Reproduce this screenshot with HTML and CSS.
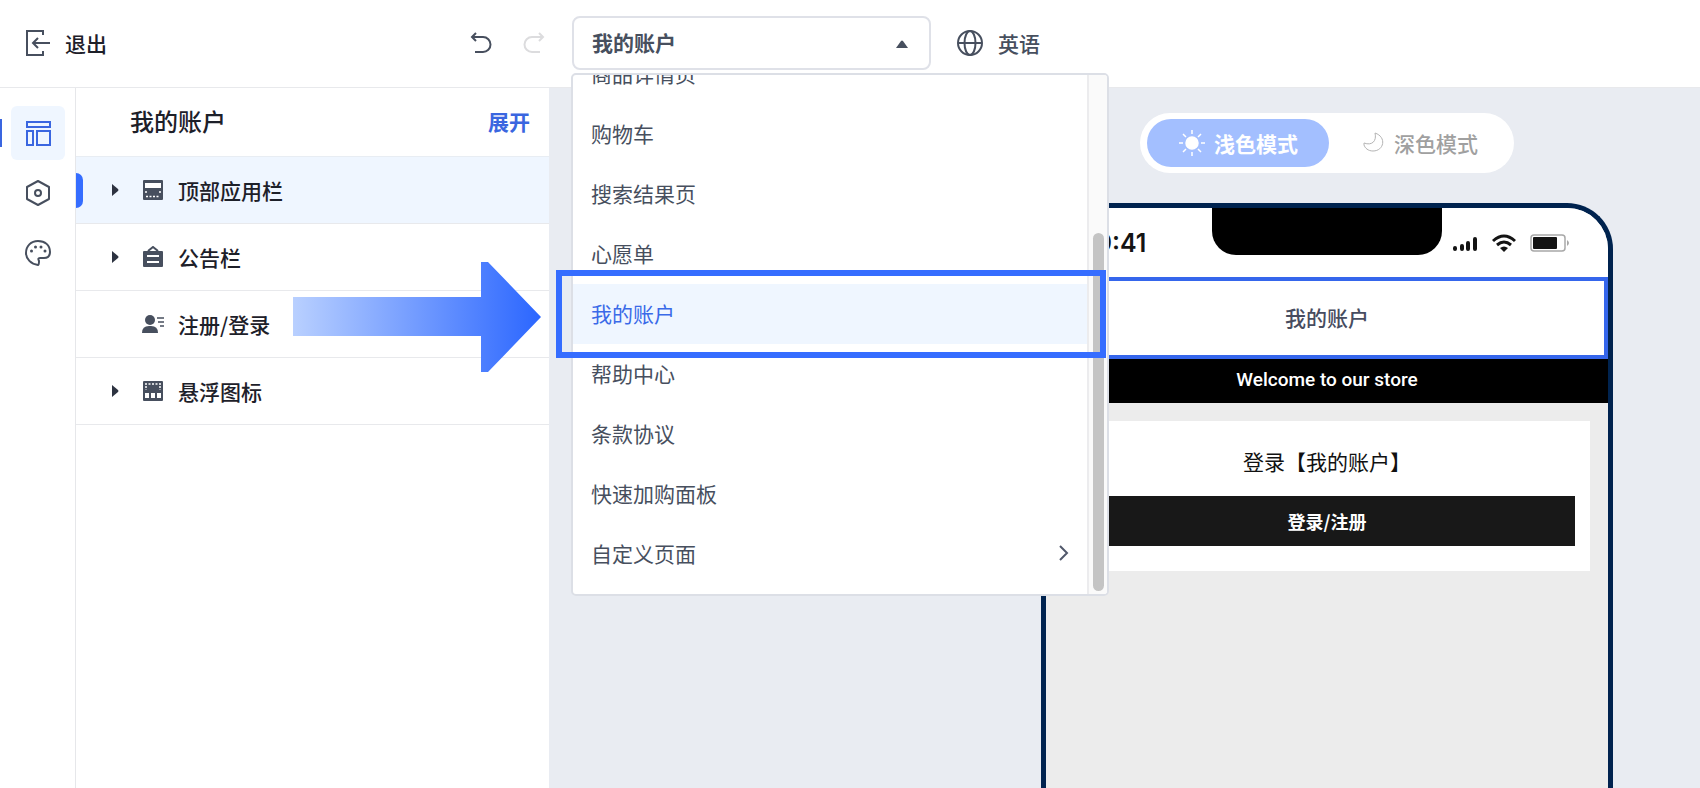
FILE: index.html
```
<!DOCTYPE html>
<html lang="zh-CN">
<head>
    <meta charset="UTF-8">
    <meta name="viewport" content="width=device-width, initial-scale=1.0">
    <title>我的账户</title>
    <link rel="stylesheet" href="styles.css">
</head>
<body>
    <header class="topbar">
        <div class="topbar-left">
            <button class="exit-btn">
                <svg width="26" height="28" viewBox="0 0 26 28" fill="none" stroke="#474f5e" stroke-width="2">
                    <path d="M18 6V2H2v24h16v-4M25 14H8M13 9l-5 5 5 5"/>
                </svg>
                退出
            </button>
            <div class="history">
                <button class="history-btn" aria-label="撤销">
                    <svg width="22" height="22" viewBox="0 0 22 22" fill="none" stroke="#474f5e" stroke-width="2">
                        <path d="M6 1L2 5l4 4M2 5h11a7.500 7.500 0 0 1 0 15H5"/>
                    </svg>
                </button>
                <button class="history-btn" aria-label="重做" disabled>
                    <svg width="22" height="22" viewBox="0 0 22 22" fill="none" stroke="#dcdcde" stroke-width="2">
                        <path d="M16 1l4 4-4 4M20 5H9a7.500 7.500 0 0 0 0 15h8"/>
                    </svg>
                </button>
            </div>
        </div>

        <div class="page-picker">
            <select class="page-select" aria-label="页面">
                <option>我的账户</option>
            </select>
            <svg class="select-caret" width="12" height="8" viewBox="0 0 12 8"><path d="M0 8L5 1q1-1 2 0l5 7z" fill="#474f5e"/></svg>

            <div class="page-menu">
                <ul class="menu-list">
                    <li><button class="menu-item">商品详情页</button></li>
                    <li><button class="menu-item">购物车</button></li>
                    <li><button class="menu-item">搜索结果页</button></li>
                    <li><button class="menu-item">心愿单</button></li>
                    <li><button class="menu-item active">我的账户</button></li>
                    <li><button class="menu-item">帮助中心</button></li>
                    <li><button class="menu-item">条款协议</button></li>
                    <li><button class="menu-item">快速加购面板</button></li>
                    <li>
                        <button class="menu-item">
                            自定义页面
                            <svg width="10" height="16" viewBox="0 0 10 16" fill="none" stroke="#51586b" stroke-width="2"><path d="M1 1l7 7-7 7"/></svg>
                        </button>
                    </li>
                </ul>
                <div class="menu-scroll"><div class="menu-thumb"></div></div>
            </div>
            <div class="highlight-frame"></div>
        </div>

        <button class="lang-btn">
            <svg width="28" height="28" viewBox="0 0 28 28" fill="none" stroke="#474f5e" stroke-width="2">
                <circle cx="14" cy="14" r="12"/>
                <ellipse cx="14" cy="14" rx="5.500" ry="12"/>
                <path d="M2 14h24"/>
            </svg>
            英语
        </button>
    </header>

    <main class="workspace">
        <nav class="rail">
            <button class="rail-btn active" aria-label="布局">
                <svg width="26" height="26" viewBox="0 0 26 26" fill="none" stroke="#3a66e0" stroke-width="2">
                    <rect x="2" y="2" width="23" height="5"/>
                    <rect x="2" y="11" width="6" height="14"/>
                    <rect x="12" y="11" width="13" height="14"/>
                </svg>
            </button>
            <button class="rail-btn" aria-label="设置">
                <svg width="26" height="28" viewBox="0 0 26 28" fill="none" stroke="#474f5e" stroke-width="2" stroke-linejoin="round">
                    <path d="M13 2l11 6v12l-11 6-11-6V8z"/>
                    <circle cx="13" cy="14" r="3"/>
                </svg>
            </button>
            <button class="rail-btn" aria-label="主题">
                <svg width="28" height="28" viewBox="0 0 28 28" fill="none" stroke="#474f5e" stroke-width="2">
                    <path d="M14 26C7 25 2 20 2 14 2 7 7 2 14 2s12 4 12 11c0 4-2 6-6 6h-4c-2 0-2 1-1 3 0 2 0 4-1 4z"/>
                    <g fill="#474f5e" stroke="none">
                        <circle cx="7.500" cy="12" r="1.500"/><circle cx="11.500" cy="8" r="1.500"/>
                        <circle cx="17" cy="8" r="1.500"/><circle cx="21" cy="12" r="1.500"/>
                    </g>
                </svg>
            </button>
        </nav>

        <section class="panel">
            <div class="panel-head">
                <h1 class="panel-title">我的账户</h1>
                <a class="panel-expand" href="#">展开</a>
            </div>
            <ul class="section-list">
                <li class="section-row active">
                    <svg class="row-caret" viewBox="0 0 7 12"><path d="M0 0l6 5q1 1 0 2l-6 5z"/></svg>
                    <svg class="row-icon" viewBox="0 0 22 22">
                        <rect x="1" y="1" width="20" height="20" rx="1" fill="#474f5e"/>
                        <rect x="3" y="4" width="16" height="5" fill="#fff"/>
                        <path d="M4 12v3M18 12v3M4 17.500h14" stroke="#fff" stroke-width="1.500" stroke-dasharray="2 1.500"/>
                    </svg>
                    顶部应用栏
                </li>
                <li class="section-row">
                    <svg class="row-caret" viewBox="0 0 7 12"><path d="M0 0l6 5q1 1 0 2l-6 5z"/></svg>
                    <svg class="row-icon" viewBox="0 0 22 22">
                        <path d="M6 5l5-4 5 4" fill="none" stroke="#474f5e" stroke-width="2"/>
                        <rect x="1" y="5" width="20" height="16" rx="1" fill="#474f5e"/>
                        <path d="M5 10h12M5 16h12" stroke="#fff" stroke-width="2"/>
                    </svg>
                    公告栏
                </li>
                <li class="section-row">
                    <span class="row-caret"></span>
                    <svg class="row-icon" viewBox="0 0 22 22">
                        <circle cx="8" cy="7" r="5" fill="#474f5e"/>
                        <path d="M0 20q0-7 7-7h2q7 0 7 7z" fill="#474f5e"/>
                        <path d="M15 5h7M16 9h6M18 13h4" stroke="#474f5e" stroke-width="1.500"/>
                    </svg>
                    注册/登录
                </li>
                <li class="section-row">
                    <svg class="row-caret" viewBox="0 0 7 12"><path d="M0 0l6 5q1 1 0 2l-6 5z"/></svg>
                    <svg class="row-icon" viewBox="0 0 22 22">
                        <rect x="1" y="1" width="20" height="20" rx="1" fill="#474f5e"/>
                        <path d="M3 4h16M4 6v4M18 6v4" stroke="#fff" stroke-width="1.500" stroke-dasharray="2 1.500"/>
                        <path d="M3 13h4v5H3zM9 13h4v5H9zM15 13h4v5h-4z" fill="#fff"/>
                    </svg>
                    悬浮图标
                </li>
            </ul>
            <svg class="guide-arrow" width="250" height="110" viewBox="0 0 250 110">
                <defs>
                    <linearGradient id="arrowFill">
                        <stop offset="0" stop-color="#b9d0ff"/>
                        <stop offset="1" stop-color="#2b66ff"/>
                    </linearGradient>
                </defs>
                <path d="M1 35h188V0h7l53 55-53 55h-7V74H1z" fill="url(#arrowFill)"/>
            </svg>
        </section>

        <section class="canvas">
            <div class="preview">
                <div class="mode-switch">
                    <button class="mode-btn active">
                        <svg width="28" height="28" viewBox="0 0 28 28" stroke="#fff" stroke-width="1.500">
                            <circle cx="14" cy="14" r="6" fill="#fff"/>
                            <path d="M14 1v4M14 23v4M1 14h4M23 14h4M5 5l3 3M20 20l3 3M23 5l-3 3M8 20l-3 3"/>
                        </svg>
                        浅色模式
                    </button>
                    <button class="mode-btn">
                        <svg width="24" height="24" viewBox="0 0 24 24" fill="none" stroke="#b4b4b4">
                            <path d="M13 2c12 4 9 18-2 18-5 0-8-3-9-6V12c8 3 13-2 11-10z"/>
                        </svg>
                        深色模式
                    </button>
                </div>

                <div class="phone">
                    <div class="status-bar">
                        <span class="status-time">9:41</span>
                        <div class="notch"></div>
                        <div class="status-icons">
                            <svg width="26" height="18" viewBox="0 0 26 18" stroke="#141414" stroke-width="4" stroke-linecap="round">
                                <path d="M3 14v1M10 12v3M16 9v6M23 5v10"/>
                            </svg>
                            <svg width="26" height="18" viewBox="0 0 26 18" fill="none" stroke="#141414" stroke-width="3">
                                <path d="M2 7q11-10 22 0M6 11q7-6 14 0"/>
                                <path d="M9 14q4-3 8 0l-4 4z" fill="#141414" stroke="none"/>
                            </svg>
                            <svg width="40" height="18" viewBox="0 0 40 18">
                                <rect x="1" y="1" width="34" height="16" rx="3" fill="none" stroke="#a8a8a8" stroke-width="1.500"/>
                                <rect x="3" y="3" width="24" height="12" rx="1" fill="#141414"/>
                                <path d="M37 6q4 3 0 6z" fill="#a8a8a8"/>
                            </svg>
                        </div>
                    </div>
                    <div class="app-bar">我的账户</div>
                    <div class="notice">Welcome to our store</div>
                    <div class="login-card">
                        <p class="login-title">登录【我的账户】</p>
                        <button class="login-btn">登录/注册</button>
                    </div>
                </div>
            </div>
        </section>
    </main>
</body>
</html>
```
FILE: styles.css
```
* {
    box-sizing: border-box;
}
body {
    display: flex;
    flex-direction: column;
    height: 100vh;
    margin: 0;
    overflow: hidden;
    font-family: "Noto Sans CJK SC", sans-serif;
    font-size: 21px;
    line-height: 30px;
    color: #1d2029;
    background-color: #fff;
}
button {
    padding: 0;
    border: none;
    background: none;
    font: inherit;
    color: inherit;
    cursor: pointer;
}
ul {
    list-style: none;
    margin: 0;
    padding: 0;
}
svg {
    display: block;
    flex: none;
}

/* top bar */
.topbar {
    display: flex;
    align-items: center;
    flex: none;
    height: 88px;
    padding-bottom: 2px;
    border-bottom: 1px solid #e8e9ec;
}
.topbar-left {
    display: flex;
    justify-content: space-between;
    align-items: center;
    width: 572px;
    padding: 0 27px 0 25px;
}
.exit-btn {
    display: flex;
    align-items: center;
    gap: 14px;
    font-weight: 500;
}
.history {
    display: flex;
    gap: 31px;
}
.page-picker {
    position: relative;
    width: 359px;
}
.page-select {
    display: block;
    width: 100%;
    height: 54px;
    padding: 0 18px 2px;
    border: 2px solid #dfe1e8;
    border-radius: 8px;
    appearance: none;
    background-color: #fff;
    font: inherit;
    font-weight: 700;
    color: #474f5e;
}
.select-caret {
    position: absolute;
    right: 23px;
    top: 24px;
    pointer-events: none;
}
.lang-btn {
    display: flex;
    align-items: center;
    gap: 14px;
    margin-left: 25px;
    font-weight: 500;
    color: #474f5e;
}

/* page menu */
.page-menu {
    position: absolute;
    z-index: 2;
    left: -1px;
    top: 57px;
    display: flex;
    width: 538px;
    height: 523px;
    border: 2px solid #dcdfe6;
    border-radius: 5px;
    overflow: hidden;
    background-color: #fff;
}
.menu-list {
    flex: 1;
    display: flex;
    flex-direction: column;
    justify-content: flex-end;
    padding-bottom: 10px;
}
.menu-item {
    display: flex;
    justify-content: space-between;
    align-items: center;
    width: 100%;
    height: 60px;
    padding: 0 18px 2px;
    color: #474f5e;
}
.menu-item.active {
    background-color: #eff6ff;
    color: #3a6ae8;
}
.menu-scroll {
    display: flex;
    flex-direction: column;
    justify-content: flex-end;
    align-items: center;
    width: 20px;
    padding-bottom: 3px;
    border-left: 2px solid #ececee;
    background-color: #fafafa;
}
.menu-thumb {
    width: 11px;
    height: 358px;
    border-radius: 6px;
    background-color: #c4c4c4;
}
.highlight-frame {
    position: absolute;
    z-index: 3;
    left: -16px;
    top: 254px;
    width: 550px;
    height: 88px;
    border: 6px solid #356dff;
    pointer-events: none;
}

/* left rail */
.workspace {
    flex: 1;
    display: flex;
    min-height: 0;
}
.rail {
    display: flex;
    flex-direction: column;
    align-items: center;
    gap: 6px;
    width: 76px;
    padding-top: 18px;
    border-right: 1px solid #e6e7ea;
}
.rail-btn {
    position: relative;
    display: flex;
    justify-content: center;
    align-items: center;
    width: 54px;
    height: 54px;
    border-radius: 6px;
}
.rail-btn.active {
    background-color: #eff6ff;
}
.rail-btn.active::before {
    content: "";
    position: absolute;
    left: -11px;
    top: 13px;
    width: 2px;
    height: 28px;
    background-color: #3a66e0;
}

/* section panel */
.panel {
    position: relative;
    width: 473px;
}
.panel-head {
    display: flex;
    justify-content: space-between;
    align-items: center;
    height: 69px;
    padding: 0 19px 2px 54px;
    border-bottom: 1px solid #e8edf3;
}
.panel-title {
    margin: 0;
    font-size: 24px;
    font-weight: 500;
}
.panel-expand {
    font-weight: 700;
    color: #3a66e0;
    text-decoration: none;
}
.section-row {
    position: relative;
    display: flex;
    align-items: center;
    height: 67px;
    padding-left: 36px;
    border-bottom: 1px solid #e8e9ec;
    font-weight: 500;
}
.section-row.active {
    background-color: #eff6ff;
}
.section-row.active::before {
    content: "";
    position: absolute;
    left: 0;
    top: 16px;
    width: 7px;
    height: 35px;
    border-radius: 0 7px 7px 0;
    background-color: #356dff;
}
.row-caret {
    width: 7px;
    height: 12px;
    fill: #2d3341;
}
.row-icon {
    width: 22px;
    height: 22px;
    margin: 0 14px 0 23px;
}
.guide-arrow {
    position: absolute;
    z-index: 1;
    left: 216px;
    top: 174px;
}

/* preview */
.canvas {
    flex: 1;
    display: flex;
    justify-content: flex-end;
    padding: 25px 87px 0 0;
    background-color: #e9ecf2;
}
.preview {
    display: flex;
    flex-direction: column;
    align-items: center;
    gap: 30px;
    width: 572px;
}
.mode-switch {
    display: flex;
    flex: none;
    width: 374px;
    padding: 6px 3px 6px 7px;
    border-radius: 30px;
    background-color: #fff;
}
.mode-btn {
    flex: 1;
    display: flex;
    justify-content: center;
    align-items: center;
    gap: 8px;
    height: 48px;
    border-radius: 24px;
    font-weight: 500;
    color: #a0a0a0;
}
.mode-btn.active {
    background-color: #a3bfff;
    font-weight: 700;
    color: #fff;
}
.phone {
    flex: 1;
    width: 100%;
    border: 5px solid #00234f;
    border-bottom: none;
    border-radius: 46px 46px 0 0;
    overflow: hidden;
    background-color: #ececec;
}
.status-bar {
    display: grid;
    grid-template-columns: 1fr 230px 1fr;
    height: 69px;
    background-color: #fff;
}
.status-time {
    align-self: center;
    padding-left: 50px;
    font-family: Inter, sans-serif;
    font-size: 25px;
    font-weight: 600;
    color: #141414;
}
.notch {
    height: 47px;
    border-radius: 0 0 24px 24px;
    background-color: #000;
}
.status-icons {
    display: flex;
    align-items: center;
    gap: 13px;
    padding-left: 10px;
}
.app-bar {
    display: flex;
    justify-content: center;
    align-items: center;
    height: 82px;
    padding-bottom: 2px;
    border: 4px solid #3566ec;
    background-color: #fff;
    font-weight: 500;
    color: #474c60;
}
.notice {
    padding: 6px 0 8px;
    background-color: #000;
    font-family: Roboto, sans-serif;
    font-size: 19px;
    font-weight: 500;
    text-align: center;
    color: #fff;
}
.login-card {
    margin: 18px;
    padding: 25px 15px;
    background-color: #fff;
    text-align: center;
}
.login-title {
    margin: 0 0 20px;
    color: #111;
}
.login-btn {
    width: 100%;
    height: 50px;
    background-color: #181818;
    font-size: 18px;
    font-weight: 700;
    color: #fff;
}
```
